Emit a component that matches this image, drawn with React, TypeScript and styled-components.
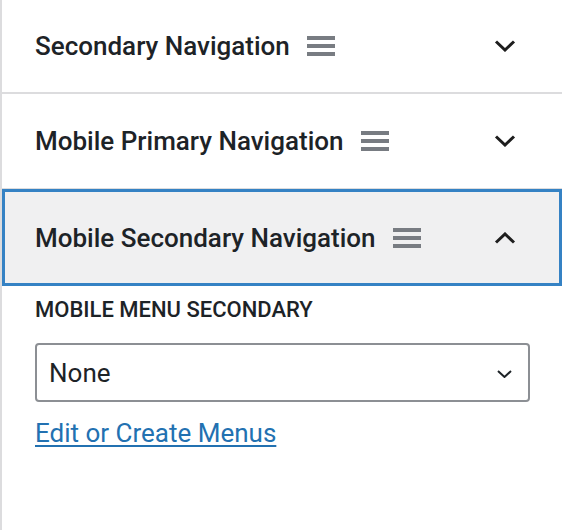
import React from "react";
import styled, { createGlobalStyle } from "styled-components";

const Global = createGlobalStyle`
  html, body { margin: 0; padding: 0; background: #fff; }
  body { font-family: Roboto, "Noto Sans", "Liberation Sans", sans-serif; color: #1d2327; }
`;

const Panel = styled.div`
  width: 562px;
  height: 530px;
  box-sizing: border-box;
  border-left: 2px solid #dcdcde;
  background: #fff;
  overflow: hidden;
`;

const Section = styled.div<{ $active?: boolean; $sep?: number; $h: number }>`
  box-sizing: border-box;
  height: ${(p) => p.$h}px;
  display: flex;
  align-items: center;
  padding: 0 ${(p) => (p.$active ? 43 : 46)}px 0 ${(p) => (p.$active ? 30 : 33)}px;
  background: ${(p) => (p.$active ? "#f0f0f1" : "#fff")};
  border: ${(p) => (p.$active ? "3px solid #3582c4" : "none")};
  border-bottom: ${(p) => (p.$active ? "3px solid #3582c4" : `${p.$sep ?? 0}px solid #dcdcde`)};
`;

const Title = styled.h3`
  margin: 0;
  font-size: 26px;
  font-weight: 500;
  color: #1d2327;
  letter-spacing: 0;
`;

const Handle = styled.svg`
  margin-left: 17px;
  flex: none;
`;

const Chevron = styled.svg`
  margin-left: auto;
  flex: none;
`;

const Content = styled.div`
  padding: 9px 0 0 33px;
  display: flex;
  flex-direction: column;
`;

const Label = styled.label`
  font-size: 22px;
  font-weight: 500;
  line-height: 30px;
  color: #1d2327;
  text-transform: uppercase;
`;

const SelectBox = styled.div`
  margin-top: 18px;
  width: 495px;
  height: 59px;
  box-sizing: border-box;
  border: 2px solid #8c8f94;
  border-radius: 4px;
  display: flex;
  align-items: center;
  padding: 0 16px 0 12px;
  font-size: 26px;
  color: #1d2327;
`;

const SelectChevron = styled.svg`
  margin-left: auto;
  margin-top: 2px;
  flex: none;
`;

const Link = styled.a`
  margin-top: 16px;
  font-size: 26px;
  color: #2271b1;
  text-decoration: underline;
  text-underline-offset: 3px;
  align-self: flex-start;
  line-height: 30px;
`;

const HandleIcon = () => (
  <Handle width="28" height="20" viewBox="0 0 28 20">
    <rect x="0" y="0" width="28" height="4" fill="#787c82" />
    <rect x="0" y="8" width="28" height="4" fill="#787c82" />
    <rect x="0" y="16" width="28" height="4" fill="#787c82" />
  </Handle>
);

const ChevronIcon = ({ up }: { up?: boolean }) => (
  <Chevron width="22" height="12" viewBox="0 0 22 12">
    <path
      d={up ? "M2 10.5 L11 2 L20 10.5" : "M2 1.5 L11 10 L20 1.5"}
      fill="none"
      stroke="#1e1e1e"
      strokeWidth="3"
    />
  </Chevron>
);

const rows = [
  { title: "Secondary Navigation", h: 94, sep: 2 },
  { title: "Mobile Primary Navigation", h: 95, sep: 1 },
];

export default function App() {
  return (
    <>
      <Global />
      <Panel>
        {rows.map((r) => (
          <Section key={r.title} $h={r.h} $sep={r.sep}>
            <Title>{r.title}</Title>
            <HandleIcon />
            <ChevronIcon />
          </Section>
        ))}
        <Section $active $h={97}>
          <Title>Mobile Secondary Navigation</Title>
          <HandleIcon />
          <ChevronIcon up />
        </Section>
        <Content>
          <Label>Mobile Menu Secondary</Label>
          <SelectBox>
            None
            <SelectChevron width="15" height="8" viewBox="0 0 15 8">
              <path d="M1 1 L7.5 7 L14 1" fill="none" stroke="#1d2327" strokeWidth="2" />
            </SelectChevron>
          </SelectBox>
          <Link href="#">Edit or Create Menus</Link>
        </Content>
      </Panel>
    </>
  );
}
